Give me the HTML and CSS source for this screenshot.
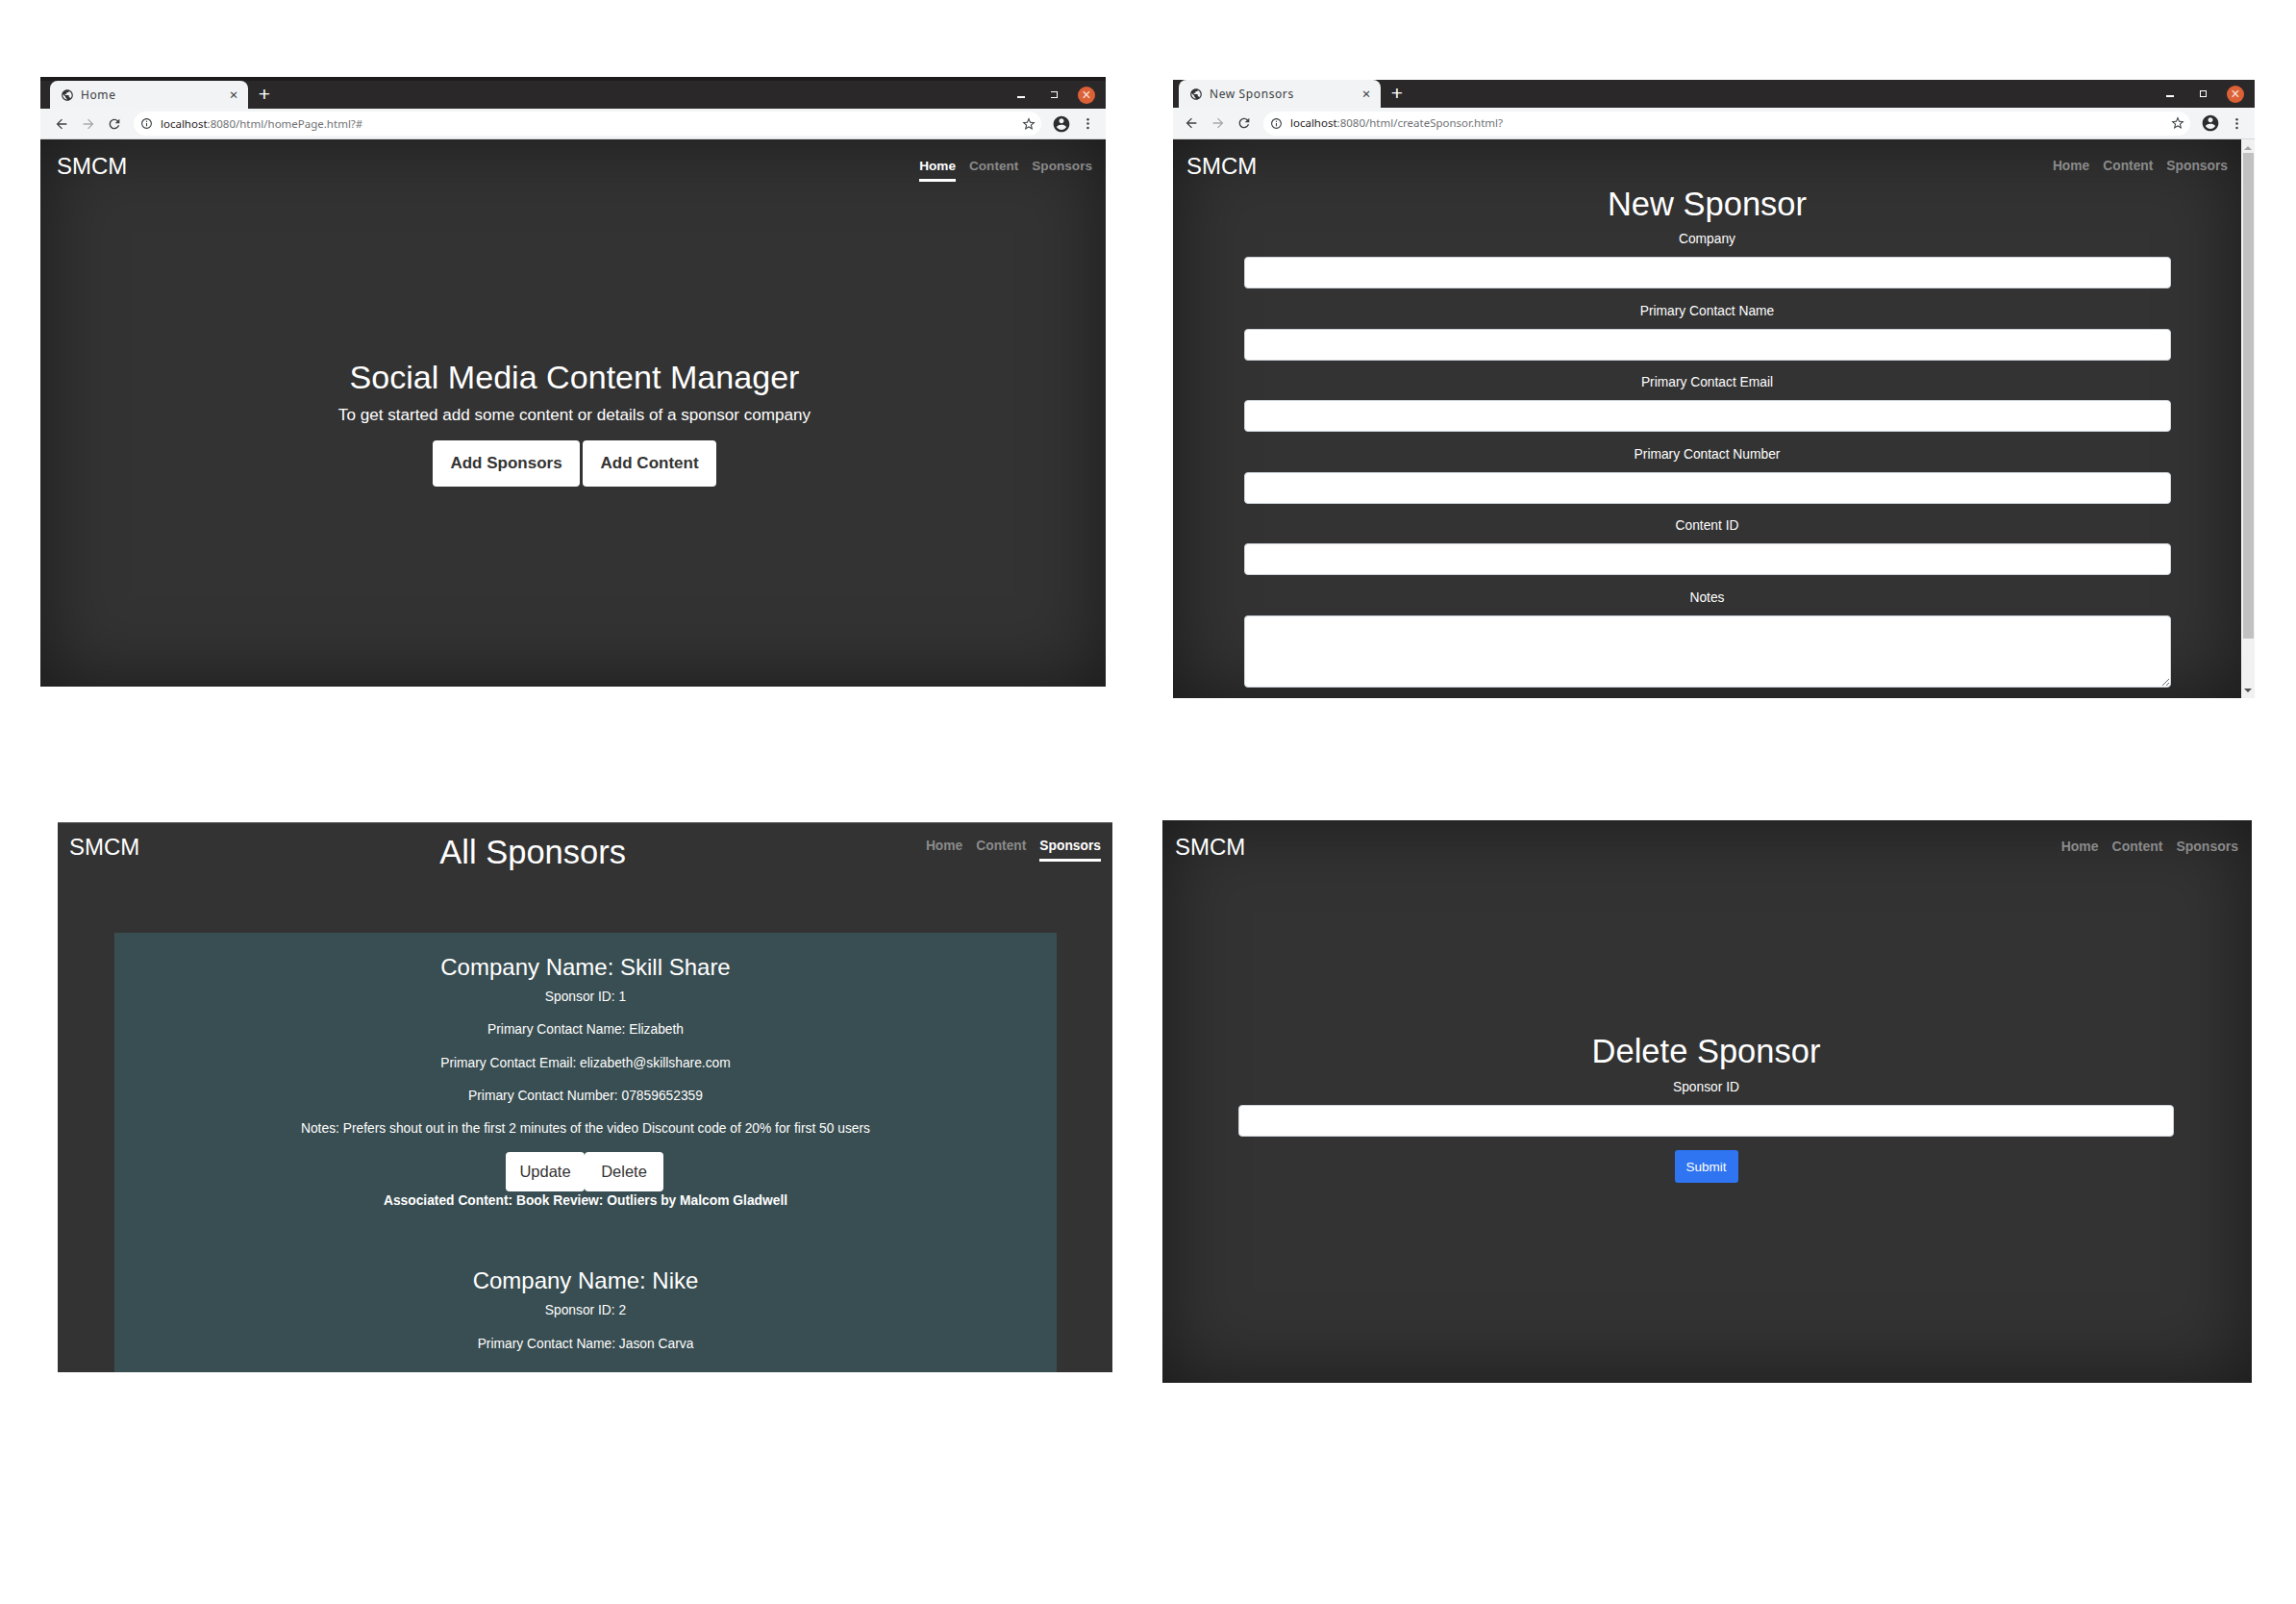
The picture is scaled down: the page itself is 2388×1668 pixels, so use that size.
FILE: index.html
```html
<!DOCTYPE html>
<html lang="en">
  <head>
    <meta charset="UTF-8" />
    <title>SMCM screens</title>
    <link rel="stylesheet" href="styles.css">
  </head>
  <body>
    <svg class="icon-defs" width="0" height="0">
      <symbol id="i-globe" viewBox="0 0 24 24"><path d="M12 2C6.48 2 2 6.48 2 12s4.48 10 10 10 10-4.48 10-10S17.52 2 12 2zm-1 17.93c-3.95-.49-7-3.85-7-7.93 0-.62.08-1.21.21-1.79L9 15v1c0 1.1.9 2 2 2v1.93zm6.9-2.54c-.26-.81-1-1.39-1.9-1.39h-1v-3c0-.55-.45-1-1-1H8v-2h2c.55 0 1-.45 1-1V7h2c1.1 0 2-.9 2-2v-.41c2.93 1.19 5 4.06 5 7.41 0 2.08-.8 3.97-2.1 5.39z"/></symbol>
      <symbol id="i-back" viewBox="0 0 24 24"><path d="M20 11H7.83l5.59-5.59L12 4l-8 8 8 8 1.41-1.41L7.83 13H20v-2z"/></symbol>
      <symbol id="i-forward" viewBox="0 0 24 24"><path d="M12 4l-1.41 1.41L16.17 11H4v2h12.17l-5.58 5.59L12 20l8-8z"/></symbol>
      <symbol id="i-reload" viewBox="0 0 24 24"><path d="M17.65 6.35A7.95 7.95 0 0 0 12 4c-4.42 0-7.99 3.58-7.99 8s3.57 8 7.99 8c3.73 0 6.84-2.55 7.73-6h-2.08A5.99 5.99 0 0 1 12 18c-3.31 0-6-2.69-6-6s2.69-6 6-6c1.66 0 3.14.69 4.22 1.78L13 11h7V4l-2.35 2.35z"/></symbol>
      <symbol id="i-info" viewBox="0 0 24 24"><path d="M11 7h2v2h-2zm0 4h2v6h-2zm1-9C6.48 2 2 6.48 2 12s4.48 10 10 10 10-4.48 10-10S17.52 2 12 2zm0 18c-4.41 0-8-3.59-8-8s3.59-8 8-8 8 3.59 8 8-3.59 8-8 8z"/></symbol>
      <symbol id="i-star" viewBox="0 0 24 24"><path d="M22 9.24l-7.19-.62L12 2 9.19 8.63 2 9.24l5.46 4.73L5.82 21 12 17.27 18.18 21l-1.63-7.03L22 9.24zM12 15.4l-3.76 2.27 1-4.28-3.32-2.88 4.38-.38L12 6.1l1.71 4.04 4.38.38-3.32 2.88 1 4.28L12 15.4z"/></symbol>
      <symbol id="i-account" viewBox="0 0 24 24"><path d="M12 2C6.48 2 2 6.48 2 12s4.48 10 10 10 10-4.48 10-10S17.52 2 12 2zm0 3c1.66 0 3 1.34 3 3s-1.34 3-3 3-3-1.34-3-3 1.34-3 3-3zm0 14.2c-2.5 0-4.71-1.28-6-3.22.03-1.99 4-3.08 6-3.08 1.99 0 5.97 1.09 6 3.08-1.29 1.94-3.5 3.22-6 3.22z"/></symbol>
      <symbol id="i-dots" viewBox="0 0 24 24"><circle cx="12" cy="5" r="2"/><circle cx="12" cy="12" r="2"/><circle cx="12" cy="19" r="2"/></symbol>
    </svg>

    <!-- home page -->
    <section class="window window-home">
      <div class="tabstrip">
        <div class="tab">
          <svg class="tab-globe"><use href="#i-globe"/></svg>
          <span class="tab-title">Home</span>
          <span class="tab-close">×</span>
        </div>
        <span class="tab-new">+</span>
        <div class="controls">
          <span class="ctl-min"></span>
          <span class="ctl-max"></span>
          <span class="ctl-close">×</span>
        </div>
      </div>
      <div class="toolbar">
        <svg class="tool"><use href="#i-back"/></svg>
        <svg class="tool tool-off"><use href="#i-forward"/></svg>
        <svg class="tool"><use href="#i-reload"/></svg>
        <div class="omnibox">
          <svg class="omni-info"><use href="#i-info"/></svg>
          <span class="url"><b>localhost</b>:8080/html/homePage.html?#</span>
          <svg class="omni-star"><use href="#i-star"/></svg>
        </div>
        <svg class="tool-account"><use href="#i-account"/></svg>
        <svg class="tool-dots"><use href="#i-dots"/></svg>
      </div>
      <div class="page cover">
        <header class="topbar">
          <span class="brand">SMCM</span>
          <nav class="nav">
            <a class="active">Home</a>
            <a>Content</a>
            <a>Sponsors</a>
          </nav>
        </header>
        <div class="hero">
          <h1>Social Media Content Manager</h1>
          <p class="lead">To get started add some content or details of a sponsor company</p>
          <div class="hero-buttons">
            <button class="btn-white">Add Sponsors</button>
            <button class="btn-white">Add Content</button>
          </div>
        </div>
      </div>
    </section>

    <!-- new sponsor form -->
    <section class="window window-new">
      <div class="tabstrip">
        <div class="tab">
          <svg class="tab-globe"><use href="#i-globe"/></svg>
          <span class="tab-title">New Sponsors</span>
          <span class="tab-close">×</span>
        </div>
        <span class="tab-new">+</span>
        <div class="controls">
          <span class="ctl-min"></span>
          <span class="ctl-max ctl-restore"></span>
          <span class="ctl-close">×</span>
        </div>
      </div>
      <div class="toolbar">
        <svg class="tool"><use href="#i-back"/></svg>
        <svg class="tool tool-off"><use href="#i-forward"/></svg>
        <svg class="tool"><use href="#i-reload"/></svg>
        <div class="omnibox">
          <svg class="omni-info"><use href="#i-info"/></svg>
          <span class="url"><b>localhost</b>:8080/html/createSponsor.html?</span>
          <svg class="omni-star"><use href="#i-star"/></svg>
        </div>
        <svg class="tool-account"><use href="#i-account"/></svg>
        <svg class="tool-dots"><use href="#i-dots"/></svg>
      </div>
      <div class="page-row">
        <div class="page cover">
          <header class="topbar">
            <span class="brand">SMCM</span>
            <nav class="nav">
              <a>Home</a>
              <a>Content</a>
              <a>Sponsors</a>
            </nav>
          </header>
          <form class="sponsor-form">
            <h1>New Sponsor</h1>
            <label class="field">Company<input type="text" /></label>
            <label class="field">Primary Contact Name<input type="text" /></label>
            <label class="field">Primary Contact Email<input type="text" /></label>
            <label class="field">Primary Contact Number<input type="text" /></label>
            <label class="field">Content ID<input type="text" /></label>
            <label class="field">Notes<textarea></textarea></label>
          </form>
        </div>
        <div class="scrollbar">
          <span class="scroll-up"></span>
          <span class="scroll-thumb"></span>
          <span class="scroll-down"></span>
        </div>
      </div>
    </section>

    <!-- sponsor list -->
    <section class="window window-list">
      <div class="page">
        <header class="topbar">
          <span class="brand">SMCM</span>
          <h1>All Sponsors</h1>
          <nav class="nav">
            <a>Home</a>
            <a>Content</a>
            <a class="active">Sponsors</a>
          </nav>
        </header>
        <div class="sponsor-panel">
          <article class="sponsor">
            <h3>Company Name: Skill Share</h3>
            <p>Sponsor ID: 1</p>
            <p>Primary Contact Name: Elizabeth</p>
            <p>Primary Contact Email: elizabeth@skillshare.com</p>
            <p>Primary Contact Number: 07859652359</p>
            <p>Notes: Prefers shout out in the first 2 minutes of the video Discount code of 20% for first 50 users</p>
            <div class="btn-group">
              <button>Update</button>
              <button>Delete</button>
            </div>
            <p class="assoc">Associated Content: Book Review: Outliers by Malcom Gladwell</p>
          </article>
          <article class="sponsor">
            <h3>Company Name: Nike</h3>
            <p>Sponsor ID: 2</p>
            <p>Primary Contact Name: Jason Carva</p>
          </article>
        </div>
      </div>
    </section>

    <!-- delete form -->
    <section class="window window-delete">
      <div class="page cover">
        <header class="topbar">
          <span class="brand">SMCM</span>
          <nav class="nav">
            <a>Home</a>
            <a>Content</a>
            <a>Sponsors</a>
          </nav>
        </header>
        <form class="delete-form">
          <h1>Delete Sponsor</h1>
          <label class="field">Sponsor ID<input type="text" /></label>
          <button class="btn-blue" type="button">Submit</button>
        </form>
      </div>
    </section>
  </body>
</html>
```

FILE: styles.css
```css
* {
  box-sizing: border-box;
}

html {
  font-family: "Liberation Sans", Arial, sans-serif;
}

body {
  margin: 0;
  width: 2388px;
  height: 1668px;
  position: relative;
  overflow: hidden;
  background-color: white;
  color: white;
}

.icon-defs {
  position: absolute;
}

h1 {
  margin: 0;
  font-size: 34.5px;
  font-weight: 400;
  line-height: 41px;
}

/* the four screenshots sit free on the sheet */
.window {
  position: absolute;
  display: flex;
  flex-direction: column;
  overflow: hidden;
}

.window-home {
  left: 42px;
  top: 80px;
  width: 1108px;
  height: 634px;
}

.window-new {
  left: 1220px;
  top: 83px;
  width: 1125px;
  height: 643px;
}

.window-list {
  left: 60px;
  top: 855px;
  width: 1097px;
  height: 572px;
}

.window-delete {
  left: 1209px;
  top: 853px;
  width: 1133px;
  height: 585px;
}

/* browser chrome */
.tabstrip {
  height: 33px;
  flex: none;
  display: flex;
  align-items: flex-end;
  padding-left: 10px;
  background-color: #2b2829;
  border-top: 4px solid #1d1b1c;
}

.window-new .tabstrip {
  height: 29px;
  padding-left: 6px;
  border-top: none;
}

.tab {
  width: 206px;
  height: 29px;
  display: flex;
  align-items: center;
  padding: 0 10px 0 11px;
  background-color: #f1f3f4;
  color: #3c4043;
  border-radius: 8px 8px 0 0;
  font-family: "Noto Sans", sans-serif;
  font-size: 12px;
  letter-spacing: 0.6px;
}

.window-new .tab {
  width: 210px;
}

.tab-globe {
  width: 14px;
  height: 14px;
  margin-right: 7px;
  fill: #2f3133;
}

.tab-title {
  flex: 1;
  margin-top: -1px;
}

.tab-close {
  font-size: 15px;
  line-height: 1;
}

.tab-new {
  width: 34px;
  height: 29px;
  text-align: center;
  font-family: "Liberation Sans", sans-serif;
  font-size: 21px;
  line-height: 28px;
  color: white;
}

.controls {
  margin-left: auto;
  height: 29px;
  display: flex;
  align-items: center;
  padding-right: 11px;
}

.ctl-min {
  width: 8px;
  height: 2px;
  margin-top: 5px;
  background-color: white;
}

.ctl-max {
  width: 7px;
  height: 7px;
  margin: 0 21.5px 0 26.5px;
  border-top: 1px solid white;
  border-right: 1px solid white;
  border-bottom: 1px solid white;
}

.ctl-restore {
  border: 1px solid white;
}

.ctl-close {
  width: 18px;
  height: 18px;
  border-radius: 50%;
  background-color: #dd6136;
  color: #f6e2da;
  font-size: 16px;
  line-height: 17px;
  text-align: center;
}

.toolbar {
  height: 32px;
  flex: none;
  display: flex;
  align-items: center;
  padding: 0 11.5px 0 14px;
  background-color: #f3f4f5;
  border-bottom: 1px solid #d6d7d8;
}

.window-new .toolbar {
  height: 33px;
  padding-left: 11px;
}

.tool {
  width: 16px;
  height: 16px;
  margin-right: 11.5px;
  fill: #3c4043;
}

.tool-off {
  fill: #a6a8aa;
}

.omnibox {
  flex: 1;
  height: 25px;
  margin-left: 0.5px;
  display: flex;
  align-items: center;
  padding: 0 5px 0 7px;
  background-color: white;
  border-radius: 13px;
}

.omni-info {
  width: 13px;
  height: 13px;
  margin-right: 8px;
  fill: #3c4043;
}

.url {
  flex: 1;
  margin-top: -1px;
  font-family: "Noto Sans", sans-serif;
  font-size: 11.5px;
  color: #6f7275;
}

.url b {
  font-weight: 400;
  color: #1f2022;
}

.omni-star {
  width: 16px;
  height: 16px;
  fill: #3c4043;
}

.tool-account {
  width: 20px;
  height: 20px;
  margin-left: 11px;
  fill: #2c2d2f;
}

.tool-dots {
  width: 15px;
  height: 15px;
  margin-left: 10px;
  fill: #3c4043;
}

/* page */
.page {
  flex: 1;
  min-height: 0;
  display: flex;
  flex-direction: column;
  background-color: #333;
  overflow: hidden;
}

.cover {
  box-shadow: inset 0 0 5rem rgba(0, 0, 0, 0.5);
}

.page-row {
  flex: 1;
  min-height: 0;
  display: flex;
}

.topbar {
  flex: none;
  height: 47px;
  display: flex;
  justify-content: space-between;
  align-items: flex-start;
  padding: 14px 14px 0 17px;
}

.brand {
  font-size: 24px;
  line-height: 27px;
}

.nav {
  display: flex;
  gap: 14px;
  padding-top: 3px;
}

.nav a {
  padding: 0 0 2px;
  font-size: 13.6px;
  font-weight: 700;
  line-height: 22px;
  color: #8a8a8a;
  border-bottom: 3px solid transparent;
}

.nav a.active {
  color: white;
  border-bottom-color: white;
}

.window-new .nav a,
.window-list .nav a {
  font-size: 13.8px;
}

.window-delete .nav a {
  font-size: 14px;
}

.window-new .topbar {
  padding-left: 14px;
}

.window-delete .topbar {
  padding-left: 13px;
}

.window-delete .nav {
  padding-top: 1.5px;
}

/* home */
.hero {
  padding: 180px 0 0 3px;
  text-align: center;
}

.hero h1 {
  font-size: 34.1px;
}

.lead {
  margin: 6.5px 0 0;
  font-size: 17.1px;
  line-height: 24px;
}

.hero-buttons {
  margin-top: 14px;
  display: flex;
  justify-content: center;
  gap: 3px;
}

.btn-white {
  height: 48px;
  padding: 0 18.5px;
  border: none;
  border-radius: 4px;
  background-color: white;
  color: #333;
  font-family: inherit;
  font-size: 17px;
  font-weight: 700;
}

/* forms */
.sponsor-form {
  width: 964px;
  margin: 0 auto;
  text-align: center;
}

.field {
  display: flex;
  flex-direction: column;
  gap: 8px;
  margin-bottom: 13.6px;
  font-size: 13.8px;
  line-height: 20px;
}

.field input,
.field textarea {
  width: 100%;
  height: 33px;
  border: 1px solid #ced4da;
  border-radius: 4px;
  background-color: white;
}

.field textarea {
  height: 75px;
}

.sponsor-form h1 {
  margin-bottom: 6px;
}

.scrollbar {
  width: 14px;
  flex: none;
  display: flex;
  flex-direction: column;
  align-items: center;
  background-color: #f1f1f1;
}

.scroll-up {
  margin-top: 7px;
  border-left: 4px solid transparent;
  border-right: 4px solid transparent;
  border-bottom: 4px solid #a3a3a3;
}

.scroll-thumb {
  width: 11px;
  height: 505px;
  margin-top: 3px;
  background-color: #c1c1c1;
}

.scroll-down {
  margin-top: auto;
  margin-bottom: 6px;
  border-left: 4px solid transparent;
  border-right: 4px solid transparent;
  border-top: 4px solid #505050;
}

/* sponsor list */
.window-list .page {
  border-top: 1px solid #5a5a5a;
}

.window-list .topbar {
  height: 114px;
  padding: 11px 12px 0 12px;
}

.window-list .nav {
  padding-top: 2px;
}

.window-list h1 {
  margin-top: -1px;
}

.sponsor-panel {
  flex: 1;
  width: 980px;
  margin-left: 59px;
  padding-top: 20.5px;
  background-color: #394e52;
  text-align: center;
}

.sponsor {
  margin-bottom: 57.5px;
}

.sponsor h3 {
  margin: 0 0 6.5px;
  font-size: 24px;
  font-weight: 400;
  line-height: 30px;
}

.sponsor p {
  margin: 0 0 14.3px;
  font-size: 13.8px;
  line-height: 20px;
}

.btn-group {
  display: flex;
  justify-content: center;
  margin: 1px 2px 0 0;
}

.btn-group button {
  width: 82px;
  height: 41px;
  border: none;
  border-radius: 4px;
  background-color: white;
  color: #333;
  font-family: inherit;
  font-size: 16.5px;
}

.sponsor .assoc {
  margin: 0;
  font-weight: 700;
}

/* delete */
.delete-form {
  width: 973px;
  margin: 173px 0 0 79px;
  text-align: center;
}

.delete-form .field {
  margin-bottom: 14px;
}

.delete-form h1 {
  margin-bottom: 7px;
}

.btn-blue {
  width: 66px;
  height: 34px;
  padding: 0;
  border: none;
  border-radius: 3px;
  background-color: #2f74f0;
  color: white;
  font-family: inherit;
  font-size: 13.5px;
}
```
